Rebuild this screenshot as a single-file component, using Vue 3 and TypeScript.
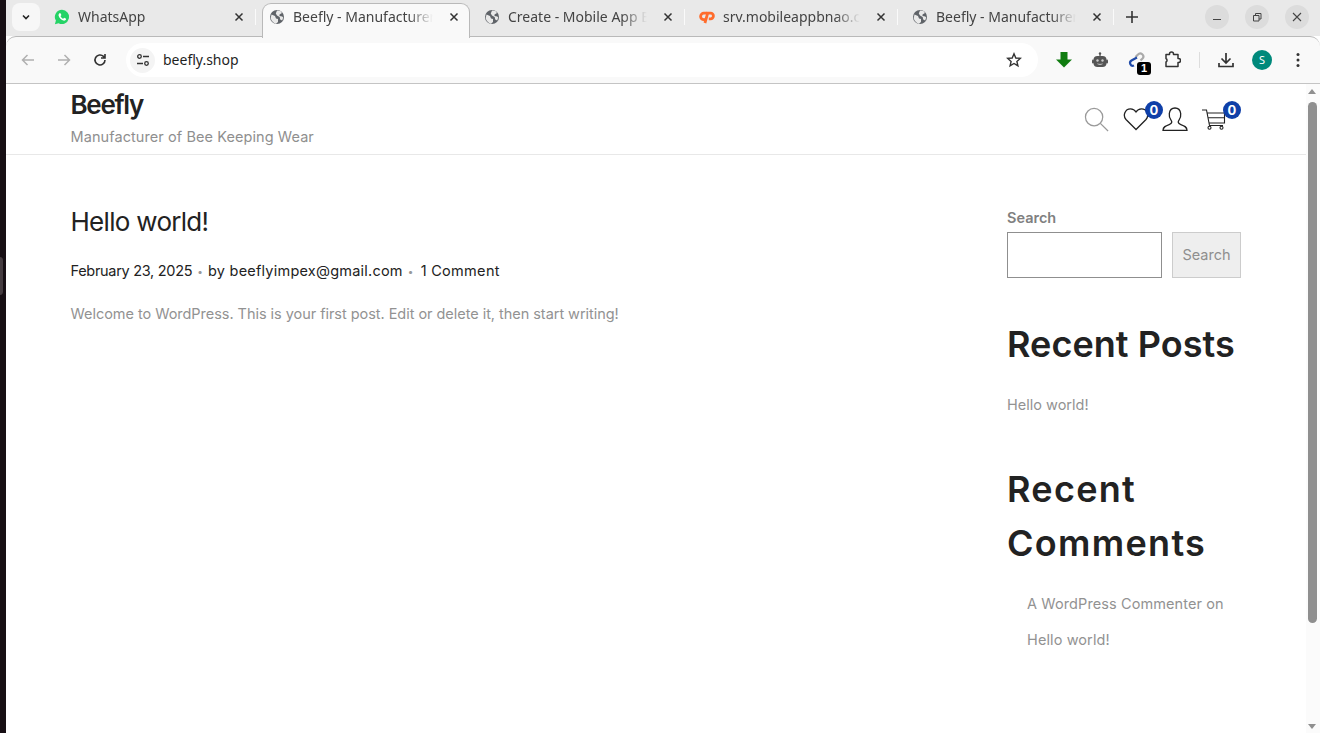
<script setup lang="ts">
interface Tab { title: string; icon: string; active?: boolean; width: number }
const tabs: Tab[] = [
  { title: 'WhatsApp', icon: 'wa', width: 216 },
  { title: 'Beefly - Manufacturer of Bee', icon: 'globe', active: true, width: 208 },
  { title: 'Create - Mobile App Builder', icon: 'globe', width: 215 },
  { title: 'srv.mobileappbnao.com', icon: 'cp', width: 213 },
  { title: 'Beefly - Manufacturer of Bee', icon: 'globe', width: 216 },
]
</script>

<template>
  <div class="screen">
    <div class="edge"><span class="edge-pill"></span></div>
    <div class="browser">
      <div class="tabstrip">
        <button class="tab-menu">
          <svg width="10" height="10" viewBox="0 0 10 10"><path d="M2 3.500 5 6.500 8 3.500" fill="none" stroke="#222" stroke-width="1.600"/></svg>
        </button>
        <div v-for="t in tabs" :key="t.title + t.width" class="tab" :class="{ active: t.active }" :style="{ width: t.width + 'px' }">
          <svg v-if="t.icon === 'wa'" class="fav" viewBox="0 0 16 16">
            <path d="M8 .8a7.100 7.100 0 0 0-6.100 10.800L.9 15.200l3.700-1A7.100 7.100 0 1 0 8 .8Z" fill="#25d366"/>
            <path d="M5.600 4.200c-.9.5-1.300 1.600-.9 2.800.7 2 2.500 3.800 4.500 4.500 1.200.4 2.300 0 2.800-1 .2-.4.1-.7-.2-.9l-1.300-.7c-.3-.1-.5 0-.7.2l-.5.6c-1.200-.4-2.300-1.500-2.800-2.800l.6-.5c.2-.2.3-.4.2-.7L6.500 4.400c-.2-.3-.5-.4-.9-.2Z" fill="#fff"/>
          </svg>
          <svg v-else-if="t.icon === 'globe'" class="fav" viewBox="0 0 16 16">
            <circle cx="8" cy="8" r="7" fill="#5f6368"/>
            <path d="M2.500 5.500 6 7l1 2.500 2 .5v3l-2 1.800C4 14 1.800 11 1.800 8.500ZM8 1.500l3.500.5 1.500 2-2.500 1.500v1.500l2.800.5.900 1-1 3-2-1-.5-2.500L8 6.500 6.800 4.500Z" fill="#e9e9e9"/>
          </svg>
          <svg v-else class="fav" viewBox="0 0 16 16">
            <path d="M8 4.200H4.800a3.200 3.200 0 0 0 0 6.400h1.700" fill="none" stroke="#ff6c2c" stroke-width="2.800"/>
            <path d="M5.900 14 8.700 4.200h2.900a2.800 2.800 0 0 1 0 5.600H9.800" fill="none" stroke="#ff6c2c" stroke-width="2.800"/>
          </svg>
          <span class="tab-title">{{ t.title }}</span>
          <svg class="close" viewBox="0 0 10 10"><path d="M1.500 1.500 8.500 8.500M8.500 1.500 1.500 8.500" stroke="#333" stroke-width="1.500"/></svg>
          <span v-if="!t.active" class="sep"></span>
        </div>
        <svg class="plus" viewBox="0 0 12 12"><path d="M6 0v12M0 6h12" stroke="#333" stroke-width="1.600"/></svg>
        <div class="winctl">
          <span class="wbtn"><svg viewBox="0 0 10 10"><path d="M1 7.500h8" stroke="#444" stroke-width="1"/></svg></span>
          <span class="wbtn"><svg viewBox="0 0 10 10"><path d="M1.500 3.500h5.500v5.500H1.500ZM3.500 3.500V1.500H9V7H7" fill="none" stroke="#444" stroke-width="1"/></svg></span>
          <span class="wbtn"><svg viewBox="0 0 10 10"><path d="M1 1l8 8M9 1l-8 8" stroke="#444" stroke-width="1.100"/></svg></span>
        </div>
      </div>

      <div class="toolbar">
        <svg class="nav" viewBox="0 0 16 16"><path d="M14 8H2.500M7.500 3 2.500 8l5 5" fill="none" stroke="#b0b0b0" stroke-width="1.500"/></svg>
        <svg class="nav" viewBox="0 0 16 16"><path d="M2 8h11.500M8.500 3l5 5-5 5" fill="none" stroke="#b0b0b0" stroke-width="1.500"/></svg>
        <svg class="nav" viewBox="0 0 16 16"><path d="M13 8a5 5 0 1 1-1.500-3.600L13 6M13 2v4H9" fill="none" stroke="#333" stroke-width="1.600"/></svg>
        <div class="omnibox">
          <span class="site-icon">
            <svg viewBox="0 0 14 14" width="14" height="14"><circle cx="3.500" cy="3.500" r="1.800" fill="none" stroke="#333" stroke-width="1.300"/><path d="M7 3.500h6M1 10.500h6" stroke="#333" stroke-width="1.300"/><circle cx="10.500" cy="10.500" r="1.800" fill="none" stroke="#333" stroke-width="1.300"/></svg>
          </span>
          <span class="url">beefly.shop</span>
          <svg class="star" viewBox="0 0 16 16"><path d="M8 1.800 9.800 6l4.500.4-3.400 3 1 4.400L8 11.500l-3.900 2.300 1-4.400-3.400-3L6.200 6Z" fill="none" stroke="#333" stroke-width="1.400"/></svg>
        </div>
        <div class="exts">
          <svg class="ext" viewBox="0 0 18 18"><path d="M5.500 1h7v7.500H17L9 16.500 1 8.500h4.500Z" fill="#107c10"/></svg>
          <svg class="ext" viewBox="0 0 18 18"><circle cx="9" cy="2.500" r="1.200" fill="#555"/><rect x="8.400" y="2.500" width="1.200" height="3" fill="#555"/><rect x="2.500" y="5" width="13" height="11" rx="4" fill="#555"/><rect x="1" y="8.500" width="2" height="4" rx="1" fill="#555"/><rect x="15" y="8.500" width="2" height="4" rx="1" fill="#555"/><circle cx="6.500" cy="9.500" r="1.200" fill="#ccc"/><circle cx="11.500" cy="9.500" r="1.200" fill="#ccc"/><path d="M6.500 12.800c1.500.8 3.500.8 5 0" fill="none" stroke="#ccc" stroke-width="1"/></svg>
          <span class="ext link-ext">
            <svg viewBox="0 0 18 18" width="18" height="18"><path d="M8.500 6 11 3.500a3 3 0 0 1 4.500 4l-2 2" fill="none" stroke="#aaa" stroke-width="2.200"/><path d="M10 6.500 4.500 9.500a2.800 2.800 0 0 0 2.500 5" fill="none" stroke="#1f4aa8" stroke-width="2.200"/></svg>
            <b class="ext-badge">1</b>
          </span>
          <svg class="ext" viewBox="0 0 18 18"><path d="M6.500 3.500V3a2 2 0 0 1 4 0v.5h4.500v4h.5a2 2 0 0 1 0 4H15v4H3v-4.500a2 2 0 0 0 0-3.500V3.500Z" fill="none" stroke="#333" stroke-width="1.500" stroke-linejoin="round"/></svg>
          <span class="tb-sep"></span>
          <svg class="ext dl" viewBox="0 0 18 18"><path d="M9 2v9.500M4.500 7.500 9 12l4.500-4.500M2 12v3.500h14V12" fill="none" stroke="#333" stroke-width="1.700"/></svg>
          <span class="avatar">S</span>
          <svg class="ext more" viewBox="0 0 18 18"><circle cx="9" cy="3.500" r="1.500" fill="#333"/><circle cx="9" cy="9" r="1.500" fill="#333"/><circle cx="9" cy="14.500" r="1.500" fill="#333"/></svg>
        </div>
      </div>

      <div class="viewport">
        <div class="page">
          <header class="site-header">
            <div class="brand">
              <div class="site-name">Beefly</div>
              <div class="tagline">Manufacturer of Bee Keeping Wear</div>
            </div>
            <div class="shop-icons">
              <svg class="ico search-ico" viewBox="0 0 26 26"><circle cx="10.500" cy="10.500" r="9" fill="none" stroke="#999" stroke-width="1.300"/><path d="M17 17l8 8" stroke="#999" stroke-width="1.300"/></svg>
              <span class="ico-wrap heart">
                <svg class="ico" viewBox="0 0 26 24"><path d="M13 22.500 3 12.500C-.5 8.500 2 1.800 7.500 1.800c2.500 0 4.300 1.200 5.500 3.200 1.200-2 3-3.200 5.500-3.200 5.500 0 8 6.700 4.500 10.700Z" fill="none" stroke="#222" stroke-width="1.300"/></svg>
                <b class="count">0</b>
              </span>
              <svg class="ico user" viewBox="0 0 26 24"><path d="M1 23.300c0-3.600 3-4.600 6.500-5.900 2.500-1 2.800-2.600 1.500-4.200C7.500 11.300 7 9 7.300 6.500 7.800 2.800 10 1 13 1s5.200 1.800 5.700 5.500c.3 2.500-.2 4.800-1.700 6.700-1.300 1.600-1 3.200 1.500 4.200 3.500 1.300 6.500 2.300 6.500 5.900Z" fill="none" stroke="#222" stroke-width="1.300"/></svg>
              <span class="ico-wrap cart">
                <svg class="ico" viewBox="0 0 26 24"><path d="M1 3h4.500l3 15.500h13.500M5.800 6h17.700v10H8M6.800 10.800h16.700" fill="none" stroke="#222" stroke-width="1.100"/><circle cx="8.500" cy="20.700" r="1.500" fill="none" stroke="#222" stroke-width="1.100"/><circle cx="20.500" cy="20.700" r="1.500" fill="none" stroke="#222" stroke-width="1.100"/></svg>
                <b class="count">0</b>
              </span>
            </div>
          </header>

          <div class="content">
            <main class="post">
              <h1>Hello world!</h1>
              <p class="meta"><span class="date">February 23, 2025</span><i>•</i>by beeflyimpex@gmail.com<i>•</i><span class="cm">1 Comment</span></p>
              <p class="excerpt">Welcome to WordPress. This is your first post. Edit or delete it, then start writing!</p>
            </main>
            <aside class="sidebar">
              <label class="s-label">Search</label>
              <div class="s-row">
                <input class="s-input" type="text" />
                <button class="s-btn">Search</button>
              </div>
              <h2 class="rp">Recent Posts</h2>
              <a class="w-link">Hello world!</a>
              <h2 class="rc">Recent Comments</h2>
              <p class="comment">A WordPress Commenter on Hello world!</p>
            </aside>
          </div>
        </div>
        <div class="scrollbar">
          <span class="arrow up"></span>
          <span class="thumb"></span>
          <span class="arrow down"></span>
        </div>
      </div>
    </div>
  </div>
</template>

<style>
html, body { margin: 0; overflow: hidden; }
</style>

<style scoped>
.screen { display: flex; width: 1320px; height: 733px; overflow: hidden; font-family: Inter, "Liberation Sans", sans-serif; background: #fff; }
.edge { width: 6px; background: #170f14; position: relative; flex: none; }
.edge-pill { position: absolute; left: -4px; top: 257px; width: 7px; height: 38px; border-radius: 4px; background: #453c40; }
.browser { flex: 1; display: flex; flex-direction: column; min-width: 0; }

.tabstrip { height: 36px; flex: none; background: #e9e9e9; display: flex; align-items: flex-start; padding-left: 6px; position: relative; font-family: "Noto Sans", "Open Sans", sans-serif; }
.tab-menu { width: 28px; height: 28px; margin-top: 3px; border: 0; border-radius: 8px; background: #f7f7f7; display: flex; align-items: center; justify-content: center; padding: 0; flex: none; }
.tab { height: 34px; margin-top: 3px; display: flex; align-items: center; padding: 0 10px 7px 14px; box-sizing: border-box; position: relative; flex: none; gap: 8px; color: #444; font-size: 14px; }
.tab.active { background: #f9f9f9; border: 1px solid #b9b9b9; border-bottom: 0; border-radius: 9px 9px 0 0; height: 35px; margin-left: 6px; z-index: 2; padding: 0 8px 9px 6px; }
.fav { width: 16px; height: 16px; flex: none; }
.tab-title { flex: 1; min-width: 0; white-space: nowrap; overflow: hidden; -webkit-mask-image: linear-gradient(90deg, #000 82%, transparent 100%); mask-image: linear-gradient(90deg, #000 82%, transparent 100%); }
.close { width: 10px; height: 10px; flex: none; margin: 0 2px 0 8px; }
.sep { position: absolute; right: 0; top: 6px; height: 16px; width: 1px; background: #fafafa; }
.plus { width: 12px; height: 12px; margin: 11px 0 0 12px; flex: none; }
.winctl { position: absolute; right: 11px; top: 5px; display: flex; gap: 16px; }
.wbtn { width: 24px; height: 24px; border-radius: 50%; background: #dcdcdc; display: flex; align-items: center; justify-content: center; }
.wbtn svg { width: 10px; height: 10px; }

.toolbar { height: 48px; flex: none; box-sizing: border-box; background: #f9f9f9; border-top: 1px solid #b9b9b9; border-bottom: 1px solid #c4c4c4; border-radius: 10px 10px 0 0; display: flex; align-items: center; padding-left: 14px; position: relative; z-index: 1; }
.nav { width: 16px; height: 16px; margin-right: 20px; flex: none; }
.omnibox { width: 912px; height: 34px; background: #fff; border-radius: 17px; display: flex; align-items: center; padding: 0 16px 0 4px; box-sizing: border-box; flex: none; margin-left: -2px; }
.site-icon { width: 25px; height: 25px; border-radius: 50%; background: #f4f4f4; display: flex; align-items: center; justify-content: center; }
.url { margin-left: 8px; font: 14px "Noto Sans", "Open Sans", sans-serif; color: #1f1f1f; flex: 1; position: relative; top: -1px; }
.star { width: 16px; height: 16px; }
.exts { display: flex; align-items: center; flex: 1; padding-left: 17px; }
.ext { width: 18px; height: 18px; flex: none; margin-right: 18px; }
.link-ext { position: relative; display: block; }
.ext-badge { position: absolute; right: -6px; bottom: -6px; width: 14px; height: 13px; border-radius: 3px; background: #000; color: #fff; font: 700 11px/13px "Liberation Sans", sans-serif; text-align: center; }
.tb-sep { width: 1px; height: 16px; background: #ddd; margin-right: 17px; flex: none; }
.dl { margin-right: 9px; }
.avatar { width: 20px; height: 20px; border-radius: 50%; background: #00897b; color: #fff; font: 11px/20px "Noto Sans", sans-serif; text-align: center; margin: 0 18px 0 8px; flex: none; }
.more { margin: 0 -2px 0 -1px; }

.viewport { flex: 1; display: flex; min-height: 0; }
.page { flex: 1; min-width: 0; background: #fff; }
.site-header { height: 71px; box-sizing: border-box; border-bottom: 1px solid #e8e8e8; padding: 0 65px 0 64.500px; display: flex; justify-content: space-between; align-items: flex-start; }
.site-name { font-size: 26px; line-height: 40px; margin-top: 1px; font-weight: 600; color: #222; letter-spacing: -1.300px; }
.tagline { font-size: 14.500px; line-height: 24px; color: #8f8f8f; letter-spacing: .08px; }
.shop-icons { display: flex; align-items: flex-start; padding-top: 23px; }
.ico { width: 26px; height: 24px; display: block; }
.search-ico { width: 25px; height: 25px; margin-right: 14px; }
.ico-wrap { position: relative; display: block; }
.heart { margin-right: 13px; }
.user { margin-right: 13px; }
.count { position: absolute; width: 18px; height: 18px; border-radius: 50%; background: #0f3fa8; color: #fff; font-size: 13px; line-height: 18px; font-weight: 700; text-align: center; right: -14px; top: -6px; }
.cart { margin-right: 14px; }

.content { display: flex; justify-content: space-between; padding: 0 65px 0 64.500px; }
.post { padding-top: 47px; color: #222; }
h1 { margin: 0; font-size: 26px; line-height: 40px; font-weight: 400; color: #222; letter-spacing: -.7px; }
.meta { margin: 17px 0 0; font-size: 14.500px; line-height: 24px; color: #222; letter-spacing: .22px; }
.date { letter-spacing: -.3px; }
.meta i { font-style: normal; color: #999; font-size: 10px; margin: 0 5px; vertical-align: 1px; }
.cm { margin-left: 2px; letter-spacing: .3px; }
.excerpt { margin: 19px 0 0; font-size: 14.500px; line-height: 24px; color: #929292; letter-spacing: -.04px; }
.sidebar { width: 234px; padding-top: 52px; flex: none; }
.s-label { display: block; font-size: 14.500px; font-weight: 600; line-height: 22px; color: #808080; }
.s-row { display: flex; justify-content: space-between; margin-top: 3px; }
.s-input { width: 155px; height: 46px; box-sizing: border-box; border: 1px solid #8f8f8f; background: #fff; padding: 0; margin: 0; outline: none; border-radius: 0; }
.s-btn { width: 69px; height: 46px; box-sizing: border-box; border: 1px solid #ccc; background: #eee; color: #8f8f8f; font: 14.500px Inter, sans-serif; padding: 0 0 2px; border-radius: 0; }
h2 { margin: 0; font-size: 36px; line-height: 54px; font-weight: 600; color: #222; letter-spacing: .05px; }
.rp { margin-top: 39px; }
.w-link { display: block; margin-top: 22px; font-size: 14.500px; line-height: 24px; color: #929292; }
.rc { margin-top: 45px; letter-spacing: 1.300px; }
.comment { margin: 16px 0 0; padding-left: 20px; font-size: 14.500px; line-height: 36px; color: #929292; letter-spacing: .1px; }

.scrollbar { width: 14px; flex: none; background: #fbfbfb; position: relative; }
.thumb { position: absolute; left: 2px; top: 18px; width: 9px; height: 521px; border-radius: 5px; background: #8f8f8f; }
.arrow { position: absolute; left: 2px; width: 0; height: 0; border-left: 4.500px solid transparent; border-right: 4.500px solid transparent; }
.arrow.up { top: 5px; border-bottom: 5px solid #8f8f8f; }
.arrow.down { bottom: 4px; border-top: 5px solid #8f8f8f; }
</style>
